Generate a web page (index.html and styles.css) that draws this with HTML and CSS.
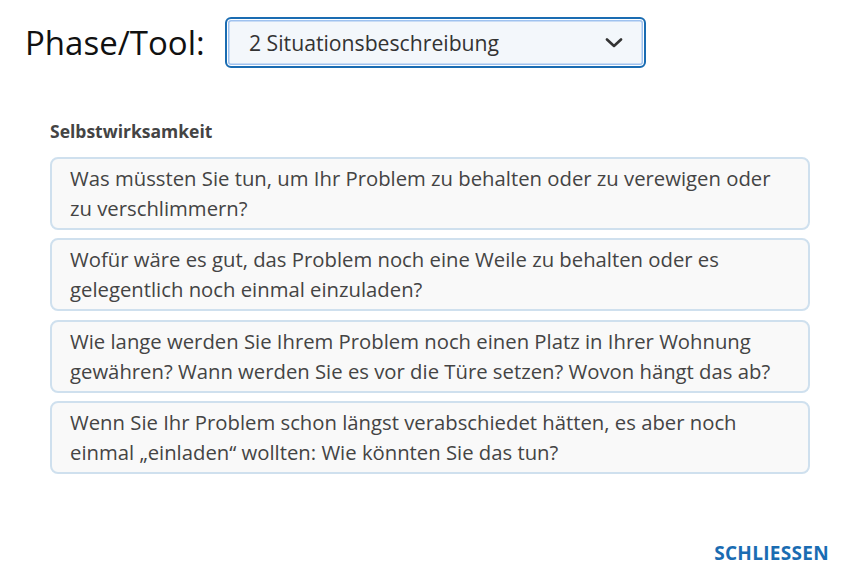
FILE: index.html
```html
<!DOCTYPE html>
<html lang="de">
<head>
<meta charset="utf-8">
<link rel="stylesheet" href="styles.css">
</head>
<body>
<div class="page">
  <div class="header">
    <span class="title">Phase/Tool:</span>
    <div class="select">
      <span class="select-text">2 Situationsbeschreibung</span>
      <svg class="chev" width="18" height="10" viewBox="0 0 18 10"><path d="M2 1.5 L9 8 L16 1.5" fill="none" stroke="#333" stroke-width="2.6" stroke-linecap="round" stroke-linejoin="round"/></svg>
    </div>
  </div>
  <div class="section">
    <div class="section-title">Selbstwirksamkeit</div>
    <div class="cards">
      <div class="card">Was müssten Sie tun, um Ihr Problem zu behalten oder zu verewigen oder zu verschlimmern?</div>
      <div class="card">Wofür wäre es gut, das Problem noch eine Weile zu behalten oder es gelegentlich noch einmal einzuladen?</div>
      <div class="card">Wie lange werden Sie Ihrem Problem noch einen Platz in Ihrer Wohnung gewähren? Wann werden Sie es vor die Türe setzen? Wovon hängt das ab?</div>
      <div class="card">Wenn Sie Ihr Problem schon längst verabschiedet hätten, es aber noch einmal „einladen“ wollten: Wie könnten Sie das tun?</div>
    </div>
  </div>
  <div class="footer">
    <span class="close">SCHLIESSEN</span>
  </div>
</div>
</body>
</html>
```
FILE: styles.css
```css
html, body {
  margin: 0;
  padding: 0;
  background: #fff;
}
body {
  font-family: "Open Sans", "Noto Sans", sans-serif;
  width: 867px;
  height: 586px;
  overflow: hidden;
}
.page {
  padding: 17px 0 0 0;
}
.header {
  display: flex;
  align-items: center;
  padding-left: 25px;
}
.title {
  font-size: 33px;
  color: #111;
  width: 200px;
  line-height: 51px;
}
.select {
  box-sizing: border-box;
  width: 421px;
  height: 51px;
  border: 2px solid #1a6cb2;
  border-radius: 6px;
  box-shadow: inset 0 0 0 1px #fff, inset 0 0 0 2.5px #9fc2ef;
  background: #f3f7fb;
  display: flex;
  align-items: center;
  justify-content: space-between;
  padding: 0 21px 0 22px;
}
.select-text {
  font-size: 21.2px;
  color: #333;
}
.chev {
  display: block;
}
.section {
  padding: 50px 57px 0 50px;
}
.section-title {
  font-size: 17.5px;
  font-weight: bold;
  color: #444;
  line-height: 26px;
  margin-bottom: 13px;
}
.cards {
  display: flex;
  flex-direction: column;
  gap: 8.3px;
}
.card {
  box-sizing: border-box;
  height: 73px;
  border: 2px solid #cfe0ee;
  border-radius: 8px;
  background: #f9f9f9;
  padding: 4px 18px 8px;
  font-size: 20.3px;
  line-height: 30px;
  color: #444;
}
.footer {
  display: flex;
  justify-content: flex-end;
  padding: 66px 38px 0 0;
}
.close {
  font-size: 19px;
  font-weight: bold;
  color: #1a6cb2;
  letter-spacing: 0.3px;
}
```
